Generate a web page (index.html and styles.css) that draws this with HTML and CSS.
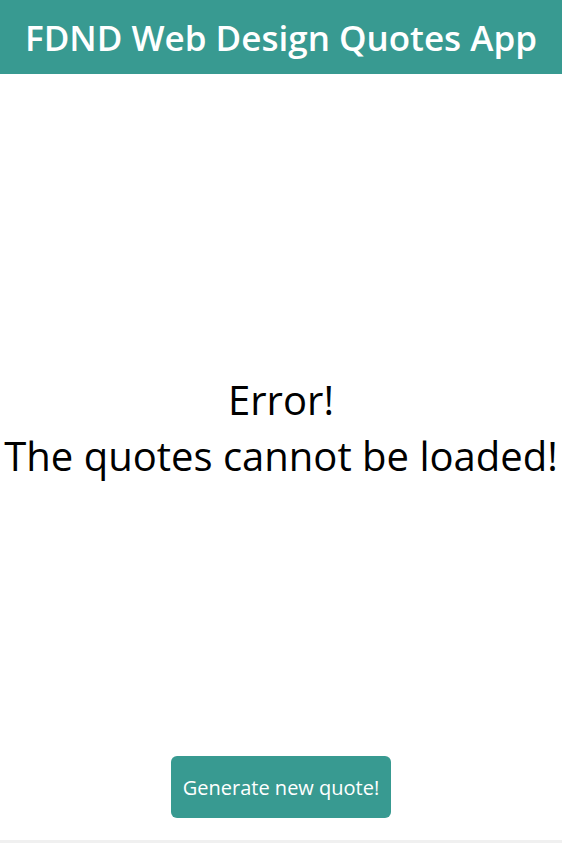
FILE: index.html
```html
<!DOCTYPE html>
<html lang="en">
<head>
<meta charset="utf-8">
<title>FDND Web Design Quotes App</title>
<link rel="stylesheet" href="styles.css">
</head>
<body>
<div class="page">
  <header class="header"><h1 class="title">FDND Web Design Quotes App</h1></header>
  <main class="main">
    <p class="message">Error!<br>The quotes cannot be loaded!</p>
  </main>
  <div class="actions"><button class="btn">Generate new quote!</button></div>
  <div class="footer"></div>
</div>
</body>
</html>
```
FILE: styles.css
```css
* { box-sizing: border-box; }
html, body { margin: 0; padding: 0; }
body { font-family: "Open Sans", "Noto Sans", sans-serif; background: #fff; color: #000; }
.page { min-height: 843px; height: 843px; display: flex; flex-direction: column; }
.header { background: #389a91; height: 74px; display: flex; align-items: center; justify-content: center; }
.title { margin: 0; color: #fff; font-size: 35px; font-weight: 600; line-height: 1; }
.main { flex: 1; display: flex; align-items: center; justify-content: center; padding-top: 26px; }
.message { margin: 0; text-align: center; font-size: 40px; line-height: 56px; font-weight: 400; }
.actions { display: flex; justify-content: center; padding-bottom: 22px; }
.btn { background: #389a91; color: #fff; border: none; border-radius: 6px; width: 220px; height: 62px; font-family: "Open Sans", "Noto Sans", sans-serif; font-size: 20px; padding: 0; }
.footer { height: 3px; background: #f0f0f0; }
```
